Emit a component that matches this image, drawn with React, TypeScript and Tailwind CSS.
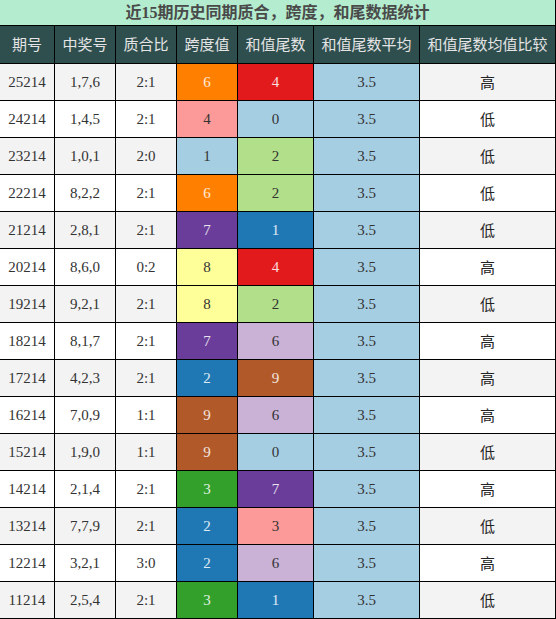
const rows: [string, string, string, number, number, string][] = [
  ["25214", "1,7,6", "2:1", 6, 4, "高"],
  ["24214", "1,4,5", "2:1", 4, 0, "低"],
  ["23214", "1,0,1", "2:0", 1, 2, "低"],
  ["22214", "8,2,2", "2:1", 6, 2, "低"],
  ["21214", "2,8,1", "2:1", 7, 1, "低"],
  ["20214", "8,6,0", "0:2", 8, 4, "高"],
  ["19214", "9,2,1", "2:1", 8, 2, "低"],
  ["18214", "8,1,7", "2:1", 7, 6, "高"],
  ["17214", "4,2,3", "2:1", 2, 9, "高"],
  ["16214", "7,0,9", "1:1", 9, 6, "高"],
  ["15214", "1,9,0", "1:1", 9, 0, "低"],
  ["14214", "2,1,4", "2:1", 3, 7, "高"],
  ["13214", "7,7,9", "2:1", 2, 3, "低"],
  ["12214", "3,2,1", "3:0", 2, 6, "高"],
  ["11214", "2,5,4", "2:1", 3, 1, "低"],
];

const spanColors: Record<number, string> = {
  1: "bg-[#a6cee3] text-[#333]",
  2: "bg-[#1f78b4] text-white/85",
  3: "bg-[#33a02c] text-white/85",
  4: "bg-[#fb9a99] text-[#333]",
  6: "bg-[#ff7f00] text-white/85",
  7: "bg-[#6a3d9a] text-white/85",
  8: "bg-[#ffff99] text-[#333]",
  9: "bg-[#b15928] text-white/85",
};

const tailColors: Record<number, string> = {
  0: "bg-[#a6cee3] text-[#333]",
  1: "bg-[#1f78b4] text-white/85",
  2: "bg-[#b2df8a] text-[#333]",
  3: "bg-[#fb9a99] text-[#333]",
  4: "bg-[#e31a1c] text-white/85",
  6: "bg-[#cab2d6] text-[#333]",
  7: "bg-[#6a3d9a] text-white/85",
  9: "bg-[#b15928] text-white/85",
};

const headers = ["期号", "中奖号", "质合比", "跨度值", "和值尾数", "和值尾数平均", "和值尾数均值比较"];

const serif = "font-['Liberation_Serif','Noto_Sans_CJK_SC',serif]";
const cjk = "font-['Noto_Sans_CJK_SC',sans-serif]";

export default function App() {
  return (
    <div className="w-[556px] h-[619px] bg-black pr-px pb-px">
      <div className="grid grid-cols-[54px_60px_60px_60px_75px_105px_135px] grid-rows-[25px_37px_repeat(15,36px)] gap-px">
        <div className={`col-span-7 bg-[#b3ecce] flex items-center justify-center text-[16px] font-bold text-[#4a4a4a] ${serif}`}>
          近15期历史同期质合，跨度，和尾数据统计
        </div>
        {headers.map((h) => (
          <div
            key={h}
            className={`bg-[#2f4f4f] flex items-center justify-center text-[15px] text-[#e4e4e4] ${cjk}`}
          >
            {h}
          </div>
        ))}
        {rows.map(([issue, nums, ratio, span, tail, cmp], i) => {
          const bg = i % 2 === 0 ? "bg-[#f3f3f3]" : "bg-white";
          const cell = `flex items-center justify-center text-[15px] ${serif}`;
          return [
            <div key={`${issue}-a`} className={`${cell} ${bg} text-[#333]`}>{issue}</div>,
            <div key={`${issue}-b`} className={`${cell} ${bg} text-[#333]`}>{nums}</div>,
            <div key={`${issue}-c`} className={`${cell} ${bg} text-[#333]`}>{ratio}</div>,
            <div key={`${issue}-d`} className={`${cell} ${spanColors[span]}`}>{span}</div>,
            <div key={`${issue}-e`} className={`${cell} ${tailColors[tail]}`}>{tail}</div>,
            <div key={`${issue}-f`} className={`${cell} bg-[#a6cee3] text-[#333]`}>3.5</div>,
            <div
              key={`${issue}-g`}
              className={`flex items-center justify-center text-[15px] text-[#222] ${cjk} ${bg}`}
            >
              {cmp}
            </div>,
          ];
        })}
      </div>
    </div>
  );
}
